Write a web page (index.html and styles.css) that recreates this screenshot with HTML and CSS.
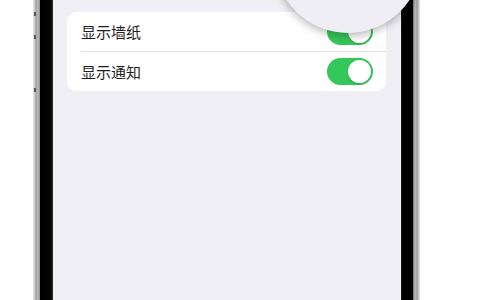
FILE: index.html
```html
<!DOCTYPE html>
<html lang="zh">
<head>
<meta charset="utf-8">
<link rel="stylesheet" href="styles.css">
</head>
<body>
<div class="stage">
  <div class="phone">
    <div class="rim rim-left">
      <span class="btn b1"></span><span class="btn b2"></span><span class="btn b3"></span>
    </div>
    <div class="bezel bezel-left"></div>
    <div class="screen">
      <div class="card">
        <div class="row">
          <span class="label">显示墙纸</span>
          <span class="toggle"><span class="knob"></span></span>
        </div>
        <div class="row">
          <span class="label">显示通知</span>
          <span class="toggle"><span class="knob"></span></span>
        </div>
      </div>
    </div>
    <div class="bezel bezel-right"></div>
    <div class="rim rim-right"></div>
    <div class="lens"></div>
  </div>
</div>
</body>
</html>
```
FILE: styles.css
```css
html, body {
  margin: 0;
  padding: 0;
  background: #ffffff;
  width: 480px;
  height: 300px;
  overflow: hidden;
  font-family: "Noto Sans CJK SC", "Noto Sans", sans-serif;
}
.stage {
  padding-left: 33px;
  height: 300px;
}
.phone {
  position: relative;
  display: flex;
  height: 300px;
  width: 387px;
}
.phone > div {
  flex: none;
}
.rim {
  width: 7px;
  position: relative;
}
.rim-left {
  background: linear-gradient(to right, #e4e4e4 0, #c9c9c9 2px, #9d9d9d 3px, #bdbdbd 5px, #8a8a8a 7px);
}
.rim-right {
  background: linear-gradient(to right, #6e6e6e 0, #bdbdbd 2px, #9d9d9d 4px, #cfcfcf 6px, #e8e8e8 7px);
}
.btn {
  position: absolute;
  left: 1px;
  width: 2px;
  height: 4px;
  background: #5a5a5a;
}
.b1 { top: 12px; }
.b2 { top: 35px; }
.b3 { top: 88px; }
.bezel-left {
  width: 13px;
  background: linear-gradient(to right, #000 0, #050505 11px, #3a3a3c 13px);
}
.bezel-right {
  width: 12px;
  background: linear-gradient(to right, #2a2a2c 0, #000 1px, #000 12px);
}
.screen {
  width: 348px;
  background: #f0eff5;
  padding: 12px 15px 0 14px;
  box-sizing: border-box;
}
.card {
  background: #ffffff;
  border-radius: 9px;
  padding-left: 14px;
}
.row {
  display: flex;
  align-items: center;
  justify-content: space-between;
  height: 39px;
  padding-right: 13px;
}
.row + .row {
  border-top: 1px solid #e3e3e6;
}
.label {
  font-size: 15px;
  color: #1f1f22;
}
.toggle {
  width: 46px;
  height: 27px;
  border-radius: 14px;
  background: #34c759;
  display: flex;
  align-items: center;
  justify-content: flex-end;
  padding-right: 2px;
  box-sizing: border-box;
}
.knob {
  width: 23px;
  height: 23px;
  border-radius: 50%;
  background: #ffffff;
  box-shadow: 0 1px 2px rgba(0,0,0,0.18);
}
.lens {
  position: absolute;
  left: 241px;
  top: -115px;
  width: 148px;
  height: 148px;
  border-radius: 50%;
  background: #efeef4;
  box-shadow: 0 3px 8px rgba(0,0,0,0.28);
}
```
